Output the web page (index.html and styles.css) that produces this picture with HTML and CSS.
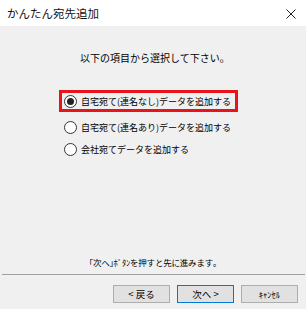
FILE: index.html
```html
<!DOCTYPE html>
<html lang="ja">
<head>
  <meta charset="UTF-8">
  <title>かんたん宛先追加</title>
  <link rel="stylesheet" href="styles.css">
</head>
<body>
  <div class="window">
    <div class="titlebar">
      <span class="title">かんたん宛先追加</span>
      <span class="close">
        <svg width="10" height="10" viewBox="0 0 10 10"><path d="M0.5 0.5 L9.5 9.5 M9.5 0.5 L0.5 9.5" stroke="#222" stroke-width="1"/></svg>
      </span>
    </div>

    <div class="content">
      <p class="lead">以下の項目から選択して下さい。</p>

      <div class="options">
        <label class="option selected">
          <span class="radio checked"></span>
          <span>自宅宛て(連名なし)データを追加する</span>
        </label>
        <label class="option">
          <span class="radio"></span>
          <span>自宅宛て(連名あり)データを追加する</span>
        </label>
        <label class="option">
          <span class="radio"></span>
          <span>会社宛てデータを追加する</span>
        </label>
      </div>

      <p class="hint">｢次へ｣ﾎﾞﾀﾝを押すと先に進みます｡</p>
    </div>

    <div class="footer">
      <button type="button" class="btn">&lt; 戻る</button>
      <button type="button" class="btn default">次へ &gt;</button>
      <button type="button" class="btn small">ｷｬﾝｾﾙ</button>
    </div>
  </div>
</body>
</html>
```

FILE: styles.css
```css
/* Base */
body {
  margin: 0;
  font-family: "Noto Sans CJK JP", "Noto Sans", sans-serif;
  font-size: 10px;
  color: #000;
  background: #fff;
}

.window {
  width: 306px;
  height: 309px;
  border-right: 2px solid #fff;
  display: flex;
  flex-direction: column;
  background: #f0f0f0;
}

/* Title bar */
.titlebar {
  height: 26px;
  background: #fff;
  display: flex;
  align-items: center;
  justify-content: space-between;
  padding: 0 10px 0 7px;
}

.title {
  font-size: 11.5px;
  color: #111;
}

.close {
  display: flex;
  margin-top: 1px;
}

/* Body */
.content {
  flex: 1;
  display: flex;
  flex-direction: column;
  padding: 0 0 0 59px;
}

.lead {
  margin: 25px 0 0 21px;
  line-height: 14px;
}

.options {
  margin-top: 25px;
  display: flex;
  flex-direction: column;
  align-items: flex-start;
  font-size: 9px;
}

.option {
  display: flex;
  align-items: center;
  gap: 4px;
  height: 16px;
  padding: 0 0 0 2px;
  border: 3px solid transparent;
}

.option.selected {
  border-color: #e8141c;
  padding-right: 4px;
  margin-bottom: 4px;
}

.radio {
  width: 11px;
  height: 11px;
  border: 1px solid #333;
  border-radius: 50%;
  background: #fff;
  display: flex;
  align-items: center;
  justify-content: center;
}

.radio.checked::after {
  content: "";
  width: 7px;
  height: 7px;
  border-radius: 50%;
  background: #222;
}

.hint {
  margin: auto 0 5px -59px;
  text-align: center;
  line-height: 14px;
  font-size: 8.5px;
  letter-spacing: -0.2px;
}

/* Footer */
.footer {
  border-top: 1px solid #a0a0a0;
  height: 35px;
  box-sizing: border-box;
  display: flex;
  justify-content: flex-end;
  align-items: flex-start;
  gap: 7px;
  padding: 10px 7px 0 0;
  margin: 0 1px 0 2px;
}

.btn {
  width: 57px;
  height: 18px;
  padding: 0;
  font-family: inherit;
  font-size: 9.5px;
  background: #e1e1e1;
  border: 1px solid #adadad;
  color: #000;
}

.btn.default {
  border-color: #0078d7;
}

.btn.small {
  font-size: 8.5px;
}
```
